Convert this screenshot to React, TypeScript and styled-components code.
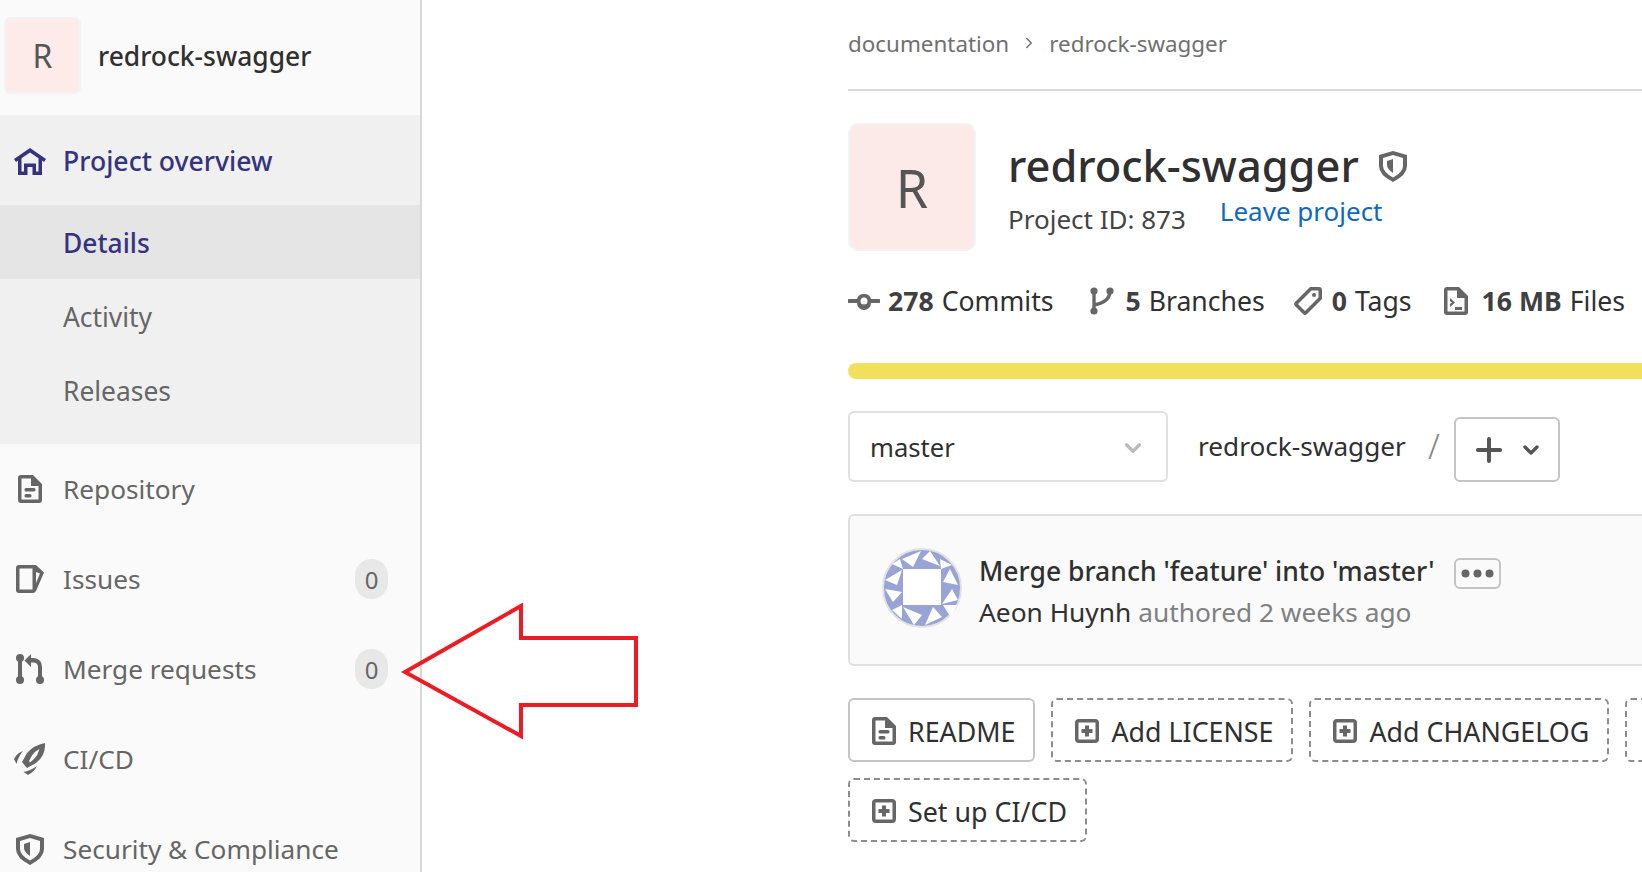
import styled, { createGlobalStyle } from 'styled-components';
import { ChevronDown, ChevronRight, Plus } from 'lucide-react';
import type { ReactNode } from 'react';

const GlobalStyle = createGlobalStyle`
  html, body {
    margin: 0;
    padding: 0;
    height: 872px;
    overflow: hidden;
    background: #fff;
  }
  body {
    font-family: 'Noto Sans', 'Open Sans', sans-serif;
    color: #303030;
  }
`;

const Page = styled.div`
  display: flex;
  width: 1642px;
  height: 872px;
  overflow: hidden;
  position: relative;
`;

const Sidebar = styled.aside`
  width: 422px;
  height: 872px;
  flex: none;
  box-sizing: border-box;
  background: #fafafa;
  border-right: 2px solid #d8d8d8;
  overflow: hidden;
`;

const SideHeader = styled.div`
  height: 115px;
  display: flex;
  align-items: center;
  padding: 0 0 4px 4px;
  gap: 17px;
  box-sizing: border-box;
`;

const SideAvatar = styled.div`
  width: 77px;
  height: 77px;
  box-sizing: border-box;
  border: 2px solid #f3f3f3;
  border-radius: 6px;
  background: #fdebe9;
  color: #555;
  font-size: 32px;
  display: flex;
  align-items: center;
  justify-content: center;
`;

const SideTitle = styled.div`
  font-size: 26.4px;
  font-weight: 500;
  color: #303030;
`;

const ActiveGroup = styled.div`
  background: #f0f0f0;
  height: 329px;
`;

const GroupHead = styled.div`
  height: 90px;
  box-sizing: border-box;
  padding: 2px 0 0 14px;
  display: flex;
  align-items: center;
  color: #35337f;
  font-size: 26.6px;
  font-weight: 500;
`;

const IconSlot = styled.span`
  width: 49px;
  flex: none;
  box-sizing: border-box;
  padding-right: 17px;
  display: flex;
  align-items: center;
  justify-content: center;
`;

const SubItem = styled.div<{ $active?: boolean }>`
  height: 74px;
  box-sizing: border-box;
  padding: 2px 0 0 63px;
  display: flex;
  align-items: center;
  font-size: 26.4px;
  font-weight: ${p => (p.$active ? 500 : 400)};
  color: ${p => (p.$active ? '#35337f' : '#666')};
  background: ${p => (p.$active ? '#e5e5e5' : 'transparent')};
`;

const NavRow = styled.div`
  height: 90px;
  display: flex;
  align-items: center;
  padding: 0 32px 0 14px;
  font-size: 26.2px;
  color: #666;
  white-space: nowrap;
`;

const NavLabel = styled.span`
  flex: 1;
`;

const Badge = styled.span`
  width: 33px;
  height: 40px;
  border-radius: 17px;
  background: #e8e8e8;
  color: #666;
  font-size: 24px;
  display: flex;
  align-items: center;
  justify-content: center;
`;

const Main = styled.main`
  margin-left: 426px;
  width: 1150px;
  flex: none;
`;

const Breadcrumbs = styled.div`
  height: 91px;
  box-sizing: border-box;
  border-bottom: 2px solid #dcdcdc;
  padding-bottom: 3px;
  display: flex;
  align-items: center;
  gap: 11px;
  color: #707070;
  font-size: 22.4px;
`;

const ProjectHead = styled.div`
  display: flex;
  gap: 32px;
  margin-top: 32px;
`;

const BigAvatar = styled.div`
  width: 128px;
  height: 128px;
  box-sizing: border-box;
  border: 2px solid #f3f3f3;
  border-radius: 10px;
  background: #fbeae8;
  color: #555;
  font-size: 52px;
  display: flex;
  align-items: center;
  justify-content: center;
`;

const TitleRow = styled.div`
  display: flex;
  align-items: center;
  gap: 20px;
  margin-top: 12px;
  height: 62px;
`;

const Title = styled.h1`
  margin: 0;
  font-size: 43.4px;
  font-weight: 500;
  color: #303030;
  line-height: 62px;
`;

const MetaRow = styled.div`
  display: flex;
  align-items: flex-end;
  gap: 34px;
  margin-top: -4px;
  font-size: 26px;
  color: #444;
`;

const LeaveLink = styled.a`
  color: #1068bf;
  margin-bottom: 8px;
`;

const Stats = styled.div`
  display: flex;
  gap: 36px;
  margin-top: 31px;
  height: 38px;
  align-items: center;
  font-size: 26.6px;
  color: #303030;
  white-space: nowrap;
`;

const Stat = styled.div<{ $iconGap: number; $shift?: number }>`
  display: flex;
  align-items: center;
  gap: ${p => p.$iconGap}px;
  margin-left: ${p => p.$shift ?? 0}px;
`;

const StatNumber = styled.b`
  font-weight: 700;
  margin-right: 8px;
  color: #404040;
`;

const Progress = styled.div`
  height: 16px;
  margin-top: 43px;
  border-radius: 8px 0 0 8px;
  background: #f2e05a;
`;

const RefRow = styled.div`
  display: flex;
  align-items: flex-end;
  margin-top: 32px;
`;

const RefSelect = styled.div`
  width: 320px;
  height: 71px;
  box-sizing: border-box;
  border: 2px solid #e0e0e0;
  border-radius: 6px;
  padding: 2px 20px 0;
  font-size: 25.6px;
  color: #303030;
  display: flex;
  align-items: center;
  justify-content: space-between;
`;

const PathName = styled.div`
  font-size: 26.2px;
  color: #303030;
  margin: 0 22px 0 30px;
  height: 71px;
  line-height: 71px;
`;

const PathSlash = styled.div`
  font-size: 34px;
  font-weight: 300;
  color: #888;
  width: 26px;
  height: 71px;
  line-height: 71px;
`;

const AddButton = styled.div`
  width: 106px;
  height: 65px;
  box-sizing: border-box;
  border: 2px solid #c4c4c4;
  border-radius: 6px;
  display: flex;
  align-items: center;
  justify-content: center;
  gap: 11px;
  color: #555;
`;

const CommitBox = styled.div`
  margin-top: 32px;
  height: 152px;
  box-sizing: border-box;
  background: #fafafa;
  border: 2px solid #e0e0e0;
  border-radius: 6px;
  display: flex;
  align-items: center;
  padding-left: 32px;
  gap: 17px;
`;

const AvatarWrap = styled.div`
  display: flex;
  margin-bottom: 4px;
`;

const CommitText = styled.div`
  display: flex;
  flex-direction: column;
  gap: 5px;
  padding-top: 2px;
`;

const CommitTitleRow = styled.div`
  display: flex;
  align-items: center;
  gap: 19px;
  font-size: 26.5px;
  font-weight: 500;
  color: #303030;
`;

const EllipsisButton = styled.div`
  width: 47px;
  height: 31px;
  box-sizing: border-box;
  border: 2px solid #c4c4c4;
  border-radius: 6px;
  margin-top: 6px;
  display: flex;
  align-items: center;
  justify-content: center;
`;

const CommitMeta = styled.div`
  font-size: 26.3px;
  color: #808080;
`;

const Author = styled.span`
  color: #303030;
`;

const Actions = styled.div`
  display: flex;
  flex-wrap: wrap;
  gap: 16px;
  margin-top: 32px;
`;

const ActionButton = styled.div<{ $dashed?: boolean; $width?: number }>`
  height: 64px;
  width: ${p => (p.$width ? `${p.$width}px` : 'auto')};
  box-sizing: border-box;
  border: 2px ${p => (p.$dashed ? 'dashed #8c8c8c' : 'solid #c4c4c4')};
  border-radius: 6px;
  padding: 2px 18px 0 22px;
  display: flex;
  align-items: center;
  gap: 12px;
  font-size: 26.8px;
  color: #303030;
  white-space: nowrap;
`;

const ArrowOverlay = styled.svg`
  position: absolute;
  left: 400px;
  top: 598px;
  pointer-events: none;
`;

const Glyph = ({ w, h, vb, children }: { w: number; h: number; vb: string; children: ReactNode }) => (
  <svg width={w} height={h} viewBox={vb} fill="#666" fillRule="evenodd">
    {children}
  </svg>
);

const HomeIcon = () => (
  <svg width={32} height={27} viewBox="0 0 32 27" fill="#35337f" fillRule="evenodd">
    <path d="M16 0 L32 11 L30 14 L28 12.6 V27 H18.5 V19 H13.5 V27 H4 V12.6 L2 14 L0 11 Z M16 4.4 L7.5 10.2 V23.5 H10 V15.5 H22 V23.5 H24.5 V10.2 Z" />
  </svg>
);

const DocIcon = () => (
  <Glyph w={24} h={28} vb="0 0 24 28">
    <path d="M3 0 H15 L24 9 V25 A3 3 0 0 1 21 28 H3 A3 3 0 0 1 0 25 V3 A3 3 0 0 1 3 0 Z M3.5 3.5 V24.5 H20.5 V11 H13 V3.5 Z" />
    <rect x="6.5" y="13" width="11" height="3.5" rx="1.5" />
    <rect x="6.5" y="19" width="7" height="3.5" rx="1.5" />
  </Glyph>
);

const IssuesIcon = () => (
  <Glyph w={28} h={28} vb="0 0 28 28">
    <path d="M3 0 H20 L28 7.5 L20 26 Q19 28 17 28 H3 A3 3 0 0 1 0 25 V3 A3 3 0 0 1 3 0 Z M3.5 3.5 V24.5 H16.5 V3.5 Z M20 7 V18 L24 8.5 Z" />
  </Glyph>
);

const MergeIcon = () => (
  <Glyph w={28} h={30} vb="0 0 28 30">
    <circle cx="4" cy="4" r="4" />
    <circle cx="4" cy="26" r="4" />
    <circle cx="24" cy="26" r="4" />
    <rect x="2" y="4" width="4" height="22" />
    <path d="M15 0 V4 H18 Q26 5 26 13 V26 H22 V13 Q22 9 18 8.5 H15 V13 L8.5 6.5 Z" />
  </Glyph>
);

const RocketIcon = () => (
  <Glyph w={32} h={32} vb="0 0 32 32">
    <path d="M31 0 Q32 12 22 20 L13 25 L8 19 L13 10 Q20 2 31 0 Z M25.5 6 Q21 8 18 12.5 L15 18 L16 19.5 L20 16 Q24 12 25.5 6 Z" />
    <path d="M9 8 Q3 10 0 16 L2.5 21 Q4 14 9 8 Z" />
    <path d="M23 23 Q20 29 14 32 L9.5 29 Q16 28 23 23 Z" />
  </Glyph>
);

const ShieldIcon = () => (
  <Glyph w={28} h={31} vb="0 0 28 31">
    <path d="M14 0 L28 4 V15 Q28 24 14 31 Q0 24 0 15 V4 Z M14 4 L4 7 V15 Q4 21 14 26.5 Q24 21 24 15 V7 Z" />
    <path d="M14 8 V22 Q8 18 8 14 V10 Z" />
  </Glyph>
);

const CommitIcon = () => (
  <Glyph w={32} h={18} vb="0 0 32 18">
    <path d="M16 2 A7 7 0 0 1 23 7 H31 A2 2 0 0 1 31 11 H23 A7 7 0 0 1 9 11 H1 A2 2 0 0 1 1 7 H9 A7 7 0 0 1 16 2 Z M16 5.5 A3.5 3.5 0 1 0 16 12.5 A3.5 3.5 0 1 0 16 5.5 Z" />
  </Glyph>
);

const BranchIcon = () => (
  <svg width={24} height={28} viewBox="0 0 24 28">
    <g fill="#666">
      <circle cx="4" cy="4" r="3.6" />
      <circle cx="20" cy="4" r="3.6" />
      <circle cx="4" cy="24" r="3.6" />
    </g>
    <path d="M4 4 V24 M4 18 Q20 15 20 4" fill="none" stroke="#666" strokeWidth="3.4" />
  </svg>
);

const TagIcon = () => (
  <Glyph w={28} h={28} vb="0 0 28 28">
    <path d="M16 0 H25 A3 3 0 0 1 28 3 V12 L13 27 A3 3 0 0 1 9 27 L1 19 A3 3 0 0 1 1 15 Z M17.5 3.5 L4 17 L11 24 L24.5 10.5 V3.5 Z" />
    <circle cx="20" cy="8" r="2" />
  </Glyph>
);

const DocCodeIcon = () => (
  <Glyph w={24} h={28} vb="0 0 24 28">
    <path d="M3 0 H15 L24 9 V25 A3 3 0 0 1 21 28 H3 A3 3 0 0 1 0 25 V3 A3 3 0 0 1 3 0 Z M3.5 3.5 V24.5 H20.5 V11 H13 V3.5 Z" />
    <path d="M6 11 L11 15.5 L6 20 L6 17 L8 15.5 L6 14 Z M11 20 H18 V23 H11 Z" />
  </Glyph>
);

const PlusSquareIcon = () => (
  <Glyph w={24} h={24} vb="0 0 24 24">
    <path d="M4 0 H20 A4 4 0 0 1 24 4 V20 A4 4 0 0 1 20 24 H4 A4 4 0 0 1 0 20 V4 A4 4 0 0 1 4 0 Z M3.5 3.5 V20.5 H20.5 V3.5 Z" />
    <path d="M10 6.5 H14 V10 H17.5 V14 H14 V17.5 H10 V14 H6.5 V10 H10 Z" />
  </Glyph>
);

const EllipsisIcon = () => (
  <Glyph w={33} h={9} vb="0 0 33 9">
    <circle cx="4.5" cy="4.5" r="4" />
    <circle cx="16.5" cy="4.5" r="4" />
    <circle cx="28.5" cy="4.5" r="4" />
  </Glyph>
);

const identiconTriangles = [
  '20,11 39,3 31,19',
  '48,3 58,18 40,11',
  '10,16 18,11 21,21',
  '3,32 20,22 15,37',
  '3,41 20,44 11,54',
  '10,62 20,57 20,71',
  '21,59 40,67 32,77',
  '43,77 51,59 60,69',
  '68,21 76,37 61,34',
  '70,41 76,52 60,56',
  '61,57 75,57 69,70',
  '58,11 70,17 59,21',
];

const Identicon = () => (
  <svg width={80} height={80} viewBox="0 0 80 80">
    <circle cx="40" cy="40" r="39" fill="#98a3d6" stroke="#e2e2e2" strokeWidth="2" />
    {identiconTriangles.map(points => (
      <polygon key={points} points={points} fill="#fff" />
    ))}
    <rect x="21" y="21" width="38" height="36" fill="#fff" />
  </svg>
);

const navItems = [
  { label: 'Repository', icon: <DocIcon /> },
  { label: 'Issues', icon: <IssuesIcon />, count: 0 },
  { label: 'Merge requests', icon: <MergeIcon />, count: 0 },
  { label: 'CI/CD', icon: <RocketIcon /> },
  { label: 'Security & Compliance', icon: <ShieldIcon /> },
];

export default function App() {
  return (
    <Page>
      <GlobalStyle />
      <Sidebar>
        <SideHeader>
          <SideAvatar>R</SideAvatar>
          <SideTitle>redrock-swagger</SideTitle>
        </SideHeader>
        <ActiveGroup>
          <GroupHead>
            <IconSlot>
              <HomeIcon />
            </IconSlot>
            Project overview
          </GroupHead>
          <SubItem $active>Details</SubItem>
          <SubItem>Activity</SubItem>
          <SubItem>Releases</SubItem>
        </ActiveGroup>
        {navItems.map(item => (
          <NavRow key={item.label}>
            <IconSlot>{item.icon}</IconSlot>
            <NavLabel>{item.label}</NavLabel>
            {item.count !== undefined && <Badge>{item.count}</Badge>}
          </NavRow>
        ))}
      </Sidebar>

      <Main>
        <Breadcrumbs>
          documentation
          <ChevronRight size={18} strokeWidth={2} color="#707070" />
          redrock-swagger
        </Breadcrumbs>

        <ProjectHead>
          <BigAvatar>R</BigAvatar>
          <div>
            <TitleRow>
              <Title>redrock-swagger</Title>
              <ShieldIcon />
            </TitleRow>
            <MetaRow>
              <span>Project ID: 873</span>
              <LeaveLink>Leave project</LeaveLink>
            </MetaRow>
          </div>
        </ProjectHead>

        <Stats>
          <Stat $iconGap={8}>
            <CommitIcon />
            <span>
              <StatNumber>278</StatNumber>Commits
            </span>
          </Stat>
          <Stat $iconGap={11} $shift={1}>
            <BranchIcon />
            <span>
              <StatNumber>5</StatNumber>Branches
            </span>
          </Stat>
          <Stat $iconGap={10} $shift={-7}>
            <TagIcon />
            <span>
              <StatNumber>0</StatNumber>Tags
            </span>
          </Stat>
          <Stat $iconGap={14} $shift={-4}>
            <DocCodeIcon />
            <span>
              <StatNumber>16 MB</StatNumber>Files
            </span>
          </Stat>
        </Stats>

        <Progress />

        <RefRow>
          <RefSelect>
            master
            <ChevronDown size={26} strokeWidth={3} color="#bbb" />
          </RefSelect>
          <PathName>redrock-swagger</PathName>
          <PathSlash>/</PathSlash>
          <AddButton>
            <Plus size={38} strokeWidth={2.5} />
            <ChevronDown size={24} strokeWidth={3.4} />
          </AddButton>
        </RefRow>

        <CommitBox>
          <AvatarWrap>
            <Identicon />
          </AvatarWrap>
          <CommitText>
            <CommitTitleRow>
              Merge branch 'feature' into 'master'
              <EllipsisButton>
                <EllipsisIcon />
              </EllipsisButton>
            </CommitTitleRow>
            <CommitMeta>
              <Author>Aeon Huynh</Author> authored 2 weeks ago
            </CommitMeta>
          </CommitText>
        </CommitBox>

        <Actions>
          <ActionButton>
            <DocIcon />
            README
          </ActionButton>
          <ActionButton $dashed>
            <PlusSquareIcon />
            Add LICENSE
          </ActionButton>
          <ActionButton $dashed>
            <PlusSquareIcon />
            Add CHANGELOG
          </ActionButton>
          {/* only the left edge of this one is on screen */}
          <ActionButton $dashed $width={340} />
          <ActionButton $dashed>
            <PlusSquareIcon />
            Set up CI/CD
          </ActionButton>
        </Actions>
      </Main>

      <ArrowOverlay width={244} height={146} viewBox="400 598 244 146">
        <polygon
          points="405,672 521,606 521,638 636,638 636,705 521,705 521,736"
          fill="none"
          stroke="#ed1c24"
          strokeWidth="4"
        />
      </ArrowOverlay>
    </Page>
  );
}
